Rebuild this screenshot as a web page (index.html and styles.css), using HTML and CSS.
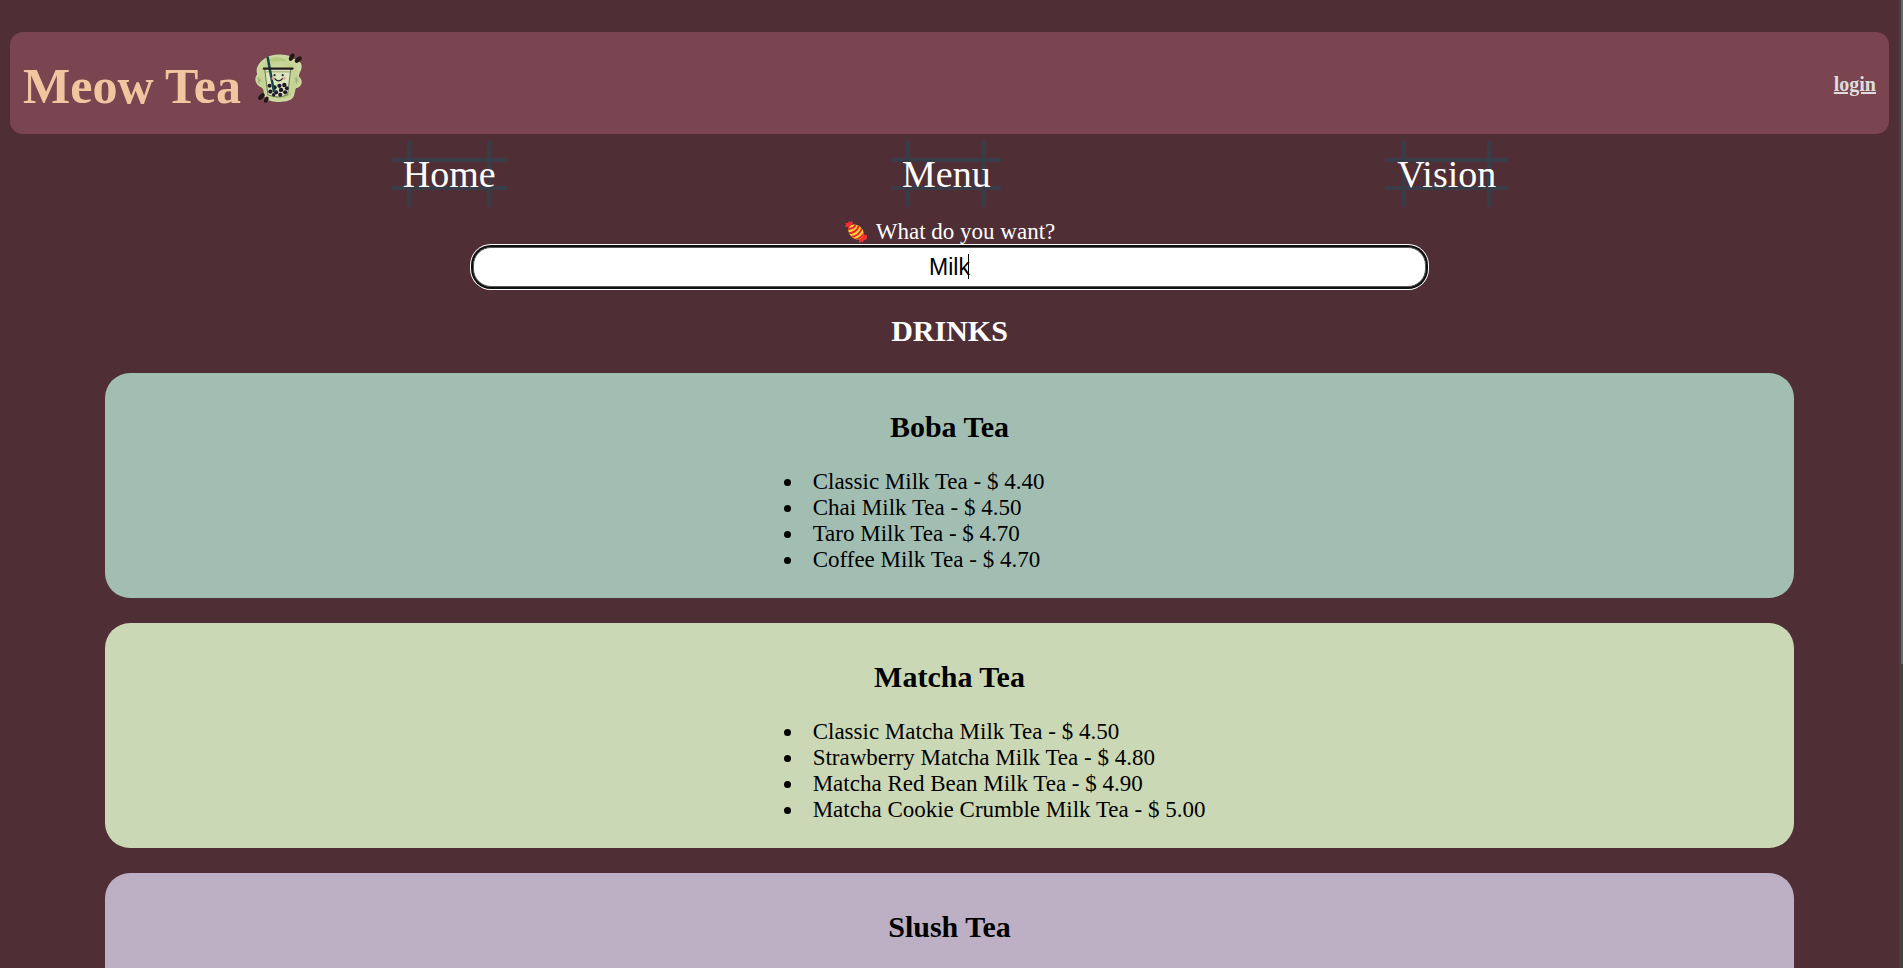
FILE: index.html
```html
<!DOCTYPE html>
<html lang="en">
<head>
<meta charset="utf-8">
<title>Meow Tea</title>
<link rel="stylesheet" href="styles.css">
</head>
<body>
<header class="banner">
  <h1 class="brand">Meow Tea <svg class="brand-cup" viewBox="2 4 61 61" aria-hidden="true">
    <defs>
      <radialGradient id="leaf" cx="50%" cy="50%" r="60%">
        <stop offset="0" stop-color="#dde5b8"/>
        <stop offset="0.6" stop-color="#c3d391"/>
        <stop offset="1" stop-color="#d3deb0"/>
      </radialGradient>
    </defs>
    <path d="M16 10C22 5 42 4 48 9C53 14 59 13 60 19C61 25 56 29 57 33C63 38 60 46 53 47C51 53 52 60 44 62C36 65 22 64 17 60C12 56 16 49 11 46C3 43 2 34 6 30C3 22 9 14 16 10Z" fill="url(#leaf)"/>
    <path d="M18 13C27 7 37 9 42 14C33 13 26 15 18 13ZM18 52C26 60 40 58 48 52C48 60 24 64 18 52Z" fill="#a9c26a" opacity="0.6"/>
    <path d="M5 34l6 5M5 40l6-4M8 33v9M51 34l6 6M51 40l6-5M54 33v9" stroke="#8d9a72" stroke-width="0.7"/>
    <path d="M15 23H47L43 55Q31 60 19 55Z" fill="#dce5bd" stroke="#52613f" stroke-width="1"/>
    <path d="M16 27H46" stroke="#8b946c" stroke-width="1"/>
    <g fill="#211a2a">
      <circle cx="21" cy="44" r="2.5"/><circle cx="27" cy="46" r="2.7"/><circle cx="33" cy="44" r="2.6"/><circle cx="39" cy="43" r="2.7"/><circle cx="42" cy="47" r="2.3"/>
      <circle cx="22" cy="51" r="2.6"/><circle cx="29" cy="52" r="2.5"/><circle cx="35" cy="49" r="2.7"/><circle cx="40" cy="52" r="2.5"/><circle cx="34" cy="55" r="2.5"/><circle cx="26" cy="55" r="2.2"/>
    </g>
    <path d="M17 9L20 8L28 52L25 52Z" fill="#16464a"/>
    <path d="M14 23H49" stroke="#251c1b" stroke-width="2.7" stroke-linecap="round"/>
    <circle cx="27" cy="31" r="1.3" fill="#222"/><circle cx="37" cy="31" r="1.3" fill="#222"/>
    <path d="M27 35Q32 41 37 35" fill="none" stroke="#222" stroke-width="1.7"/>
    <circle cx="25" cy="35" r="1.6" fill="#eda198"/><circle cx="39" cy="35" r="1.6" fill="#eda198"/>
    <g fill="#211817">
      <ellipse cx="48" cy="9" rx="2.8" ry="5" transform="rotate(28 48 9)"/>
      <ellipse cx="56" cy="12" rx="2.8" ry="5" transform="rotate(48 56 12)"/>
      <ellipse cx="11" cy="57" rx="2.8" ry="5" transform="rotate(42 11 57)"/>
      <ellipse cx="17" cy="61" rx="2.4" ry="4" transform="rotate(25 17 61)"/>
    </g>
  </svg></h1>
  <a class="login" href="#">login</a>
</header>
<nav class="tabs">
  <a class="tab" href="#">Home</a>
  <a class="tab" href="#">Menu</a>
  <a class="tab" href="#">Vision</a>
</nav>
<form class="search">
  <label class="search-label" for="query">
    <svg class="candy" viewBox="0 0 24 24" aria-hidden="true">
      <defs>
        <clipPath id="sweet"><ellipse cx="12" cy="12" rx="8.4" ry="6.6" transform="rotate(42 12 12)"/></clipPath>
      </defs>
      <path d="M8 9L5 9L4 7L1 7L2 4L1 3L4 3L5 1L7 2L8 1L9 3L8 5Z" fill="#f02d30"/>
      <path d="M16 16L20 14L21 15L23 15L23 18L22 20L20 20L19 22L17 22L15 23L15 19Z" fill="#f02d30"/>
      <g clip-path="url(#sweet)">
        <rect width="24" height="24" fill="#fcd03a"/>
        <path d="M4 9Q11 9 12 3M4 13.500Q13 13 15 5M6 17Q15 17 18 8M10 20Q17 19 21 12" fill="none" stroke="#e8262c" stroke-width="1.9"/>
      </g>
    </svg>
    What do you want?
  </label>
  <span class="search-field">
    <input class="search-input" id="query" type="text" value="Milk">
    <span class="caret" aria-hidden="true"></span>
  </span>
</form>
<main class="menu">
  <h2 class="heading">DRINKS</h2>
  <section class="card boba">
    <h2 class="heading">Boba Tea</h2>
    <ul class="drinks">
      <li>Classic Milk Tea - $ 4.40</li>
      <li>Chai Milk Tea - $ 4.50</li>
      <li>Taro Milk Tea - $ 4.70</li>
      <li>Coffee Milk Tea - $ 4.70</li>
    </ul>
  </section>
  <section class="card matcha">
    <h2 class="heading">Matcha Tea</h2>
    <ul class="drinks">
      <li>Classic Matcha Milk Tea - $ 4.50</li>
      <li>Strawberry Matcha Milk Tea - $ 4.80</li>
      <li>Matcha Red Bean Milk Tea - $ 4.90</li>
      <li>Matcha Cookie Crumble Milk Tea - $ 5.00</li>
    </ul>
  </section>
  <section class="card slush">
    <h2 class="heading">Slush Tea</h2>
  </section>
</main>
<div class="scrollbar" aria-hidden="true"><div class="scrollbar-thumb"></div></div>
</body>
</html>
```
FILE: styles.css
```css
* {
  box-sizing: border-box;
}

body {
  height: 100vh;
  margin: 0;
  padding: 32px 14px 0 10px;
  overflow: hidden;
  background: #4f2e35;
  color: #fff;
  font: 23px/26px "Liberation Serif", "Times New Roman", serif;
}

.banner {
  display: flex;
  align-items: center;
  justify-content: space-between;
  padding: 21px 13px 19px;
  border-radius: 13px;
  background: #7a4550;
}

.brand {
  margin: 0;
  color: #f0c5a0;
  font-size: 50px;
  line-height: 57px;
}

.brand-cup {
  width: 50px;
  height: 50px;
  overflow: visible;
  vertical-align: baseline;
}

.login {
  color: #ddd;
  font-size: 20px;
  font-weight: bold;
}

.tabs {
  display: flex;
  justify-content: space-between;
  padding: 18px 20.9% 0;
}

.tab {
  position: relative;
  color: #fff;
  font-size: 38px;
  line-height: 44px;
  text-decoration: none;
}

.tab::before,
.tab::after {
  content: "";
  position: absolute;
  z-index: -1;
  border: solid #373c46;
}

.tab::before {
  inset: 6px -12%;
  border-width: 4px 0;
}

.tab::after {
  inset: -11px 5%;
  border-width: 0 4px;
}

.search {
  display: flex;
  flex-direction: column;
  align-items: center;
  margin-top: 23px;
}

.search-label {
  display: flex;
  align-items: center;
  gap: 8px;
}

.candy {
  width: 24px;
  height: 24px;
}

.search-field {
  position: relative;
  width: 50.7%;
  margin-top: 2px;
}

.search-input {
  display: block;
  width: 100%;
  height: 40px;
  padding: 0;
  border: 1px solid #555;
  border-radius: 18px;
  outline: 0;
  box-shadow: 0 0 0 2px #101010, 0 0 0 3px #fff;
  background: #fff;
  color: #000;
  font: 23px "Liberation Sans", Arial, sans-serif;
  text-align: center;
}

.caret {
  position: absolute;
  top: 7px;
  left: calc(50% + 19px);
  width: 1px;
  height: 25px;
  background: #000;
}

.menu {
  margin-top: 27px;
}

.heading {
  margin: 0 0 25px;
  font-size: 30px;
  line-height: 34px;
  text-align: center;
}

.card {
  width: 89.9%;
  min-height: 225px;
  margin: 0 auto 25px;
  padding: 37px 0 25px;
  border-radius: 25px;
  color: #000;
}

.boba {
  background: #a2beb3;
}

.matcha {
  background: #cbd8b5;
}

.slush {
  background: #beb0c4;
}

.drinks {
  margin: 0 0 0 39%;
  padding-left: 40px;
}

.drinks li {
  padding-left: 9px;
}

.scrollbar {
  position: fixed;
  inset: 0 0 0 auto;
  width: 4px;
  padding-left: 2px;
  background: #414341;
}

.scrollbar-thumb {
  height: 68.6%;
  background: #686868;
}
```
